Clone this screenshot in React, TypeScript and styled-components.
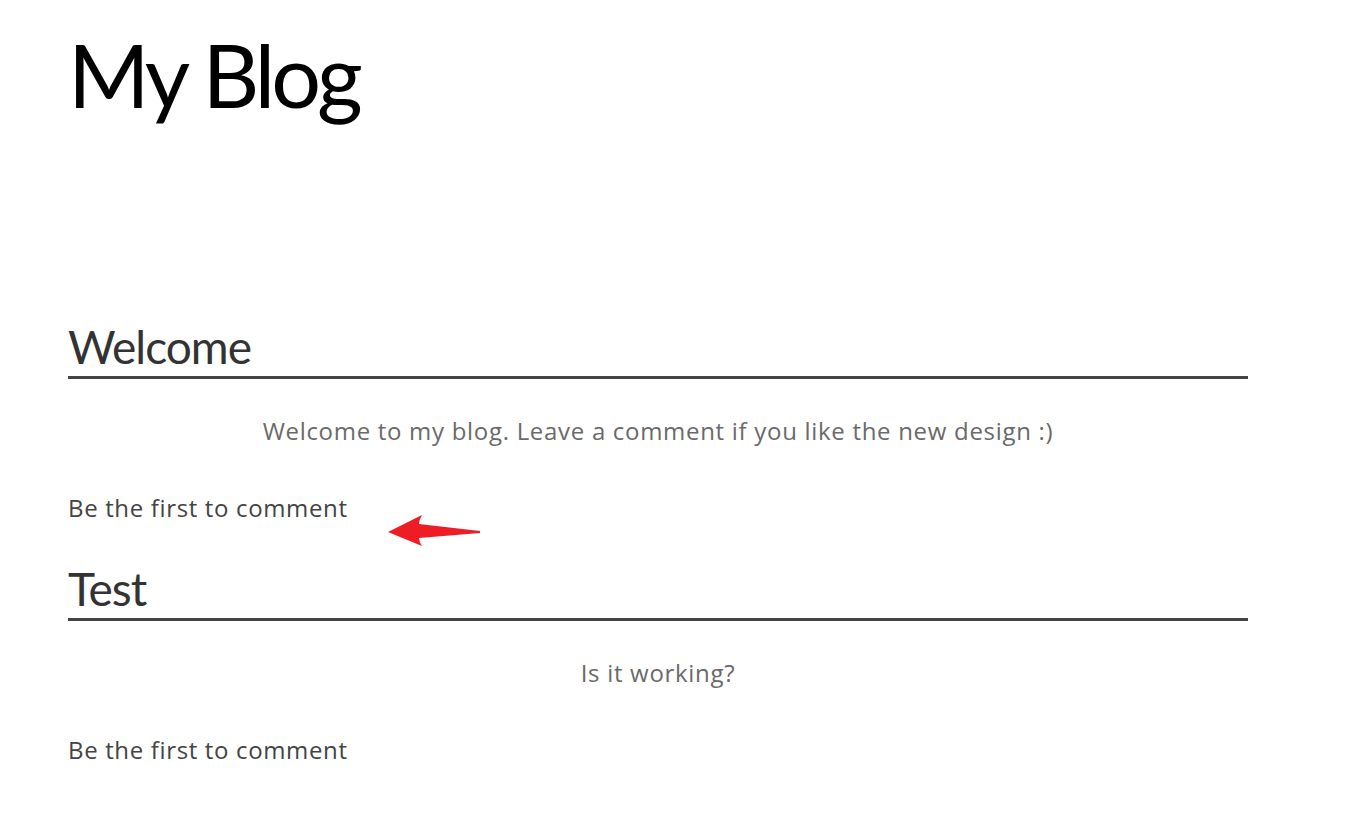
import React from "react";
import styled, { createGlobalStyle } from "styled-components";

const Global = createGlobalStyle`
  html, body { margin: 0; padding: 0; background: #fff; }
  body { font-family: "Open Sans", "DejaVu Sans", sans-serif; }
`;

const Page = styled.div`
  width: 1180px;
  padding: 19px 0 0 68px;
`;

const Title = styled.h1`
  margin: 0;
  font-family: "Lato", "Open Sans", sans-serif;
  font-size: 88px;
  font-weight: 400;
  line-height: 110px;
  color: #000;
  letter-spacing: -4px;
`;

const Posts = styled.div`
  margin-top: 190px;
  display: flex;
  flex-direction: column;
`;

const Post = styled.section`
  display: flex;
  flex-direction: column;
`;

const PostTitle = styled.h2`
  margin: 0;
  padding-bottom: 1px;
  font-family: "Lato", "Open Sans", sans-serif;
  font-size: 46px;
  font-weight: 400;
  line-height: 56px;
  color: #333;
  border-bottom: 3px solid #444;
  letter-spacing: -1px;
`;

const PostBody = styled.p`
  margin: 0;
  padding-top: 37px;
  text-align: center;
  font-size: 24px;
  line-height: 30px;
  letter-spacing: 0.7px;
  color: #6a6a6a;
`;

const CommentRow = styled.div`
  position: relative;
  padding: 47px 0 38px;
  font-size: 24px;
  line-height: 30px;
  letter-spacing: 0.65px;
  color: #444;
`;

const Arrow = styled.svg`
  position: absolute;
  left: 320px;
  top: 68px;
`;

const posts = [
  { title: "Welcome", body: "Welcome to my blog. Leave a comment if you like the new design :)", arrow: true },
  { title: "Test", body: "Is it working?", arrow: false },
];

export default function App() {
  return (
    <>
      <Global />
      <Page>
        <Title>My Blog</Title>
        <Posts>
          {posts.map((p) => (
            <Post key={p.title}>
              <PostTitle>{p.title}</PostTitle>
              <PostBody>{p.body}</PostBody>
              <CommentRow>
                Be the first to comment
                {p.arrow && (
                  <Arrow width="94" height="33" viewBox="0 0 94 33">
                    <path
                      d="M0 18 L34 1 Q31 6 31 10 L92 17 L92 19 L31 24 Q31 28 34 32 Z"
                      fill="#ee1c25"
                    />
                  </Arrow>
                )}
              </CommentRow>
            </Post>
          ))}
        </Posts>
      </Page>
    </>
  );
}
